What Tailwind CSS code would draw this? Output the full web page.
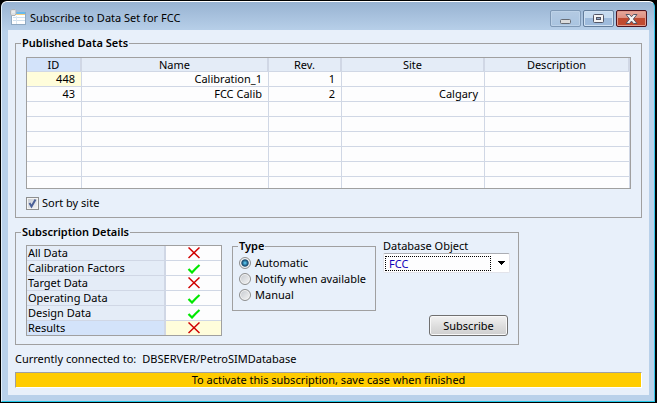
<!DOCTYPE html>
<html lang="en">
<head>
<meta charset="utf-8">
<title>Subscribe to Data Set for FCC</title>
<script src="https://cdn.jsdelivr.net/npm/@tailwindcss/browser@4"></script>
</head>
<body class="min-h-screen flex bg-black font-['Noto_Sans','Open_Sans',sans-serif] text-[11px] leading-[14px] text-black">
<div class="flex-1 flex flex-col m-px mr-[2px] rounded-t-md border border-t-white border-l-[#e4f0fa] border-r-[#35c5e8] border-b-[#20c8e8] bg-[#b9d1ea] bg-linear-to-b from-[#98b3d2] via-[#b9d1ea] via-[30px] to-[#b9d1ea] pl-[6px] pr-[5px] pb-[6px]">
  <header class="flex h-[28px] items-start pr-[2px]">
    <svg class="mt-[7px] ml-[2px] shrink-0" width="16" height="16" viewBox="0 0 16 16" aria-hidden="true">
      <rect x="1.500" y="3.500" width="14" height="12" fill="#fff" stroke="#8fa9c2"/>
      <rect x="6" y="3" width="9" height="2" fill="#66b9ec"/>
      <rect x="6" y="5" width="9" height="1" fill="#f5cf83"/>
      <path d="M3 8.500h12M3 11.500h12" stroke="#cfe0ee"/>
      <path d="M6.500 7v8" stroke="#dbe6f0"/>
      <path d="M.5 1.500L2 .5h3l1 1v3L5 6.500H1.500L.5 5z" fill="#dfe1e3" stroke="#aab2ba"/>
      <path d="M2 3h3" stroke="#f6f7f8"/>
    </svg>
    <h1 class="ml-[4px] mt-[8px] grow leading-[16px]">Subscribe to Data Set for FCC</h1>
    <div class="mt-[8px] flex gap-[2px]">
      <button type="button" aria-label="Minimize" class="grid h-[17px] w-[31px] place-items-center rounded-[2px] border border-[#7e98b5] bg-linear-to-b from-[#b4cae2] to-[#a9c4e0] shadow-[inset_0_0_0_1px_#bdd2e8]">
        <svg width="11" height="11" viewBox="0 0 11 11"><rect x=".5" y="6.500" width="10" height="4" rx="1" fill="#dcdcdc" stroke="#666b73"/></svg>
      </button>
      <button type="button" aria-label="Maximize" class="grid h-[17px] w-[31px] place-items-center rounded-[2px] border border-[#637d9b] bg-linear-to-b from-[#c5daef] from-50% to-[#9ebbdc] to-50% shadow-[inset_0_0_0_1px_#cfe0f1]">
        <svg width="11" height="9" viewBox="0 0 11 9"><rect x=".5" y=".5" width="10" height="8" rx="1" fill="#f5f5f5" stroke="#535666"/><rect x="3.500" y="3.500" width="4" height="2" fill="#8ea7c6" stroke="#535666"/></svg>
      </button>
      <button type="button" aria-label="Close" class="grid h-[17px] w-[31px] place-items-center rounded-[2px] border border-[#4d1420] bg-linear-to-b from-[#e6a99d] from-0% via-[#dd8d7e] via-50% to-[#c04a30] to-50% shadow-[inset_0_0_0_1px_#e29a8b]">
        <svg width="13" height="10" viewBox="0 0 13 10"><path d="M1 .5h3.500l2 2.300 2-2.300H12L8.400 5l3.600 4.500H8.500l-2-2.400-2 2.400H1L4.600 5z" fill="#f4f4f4" stroke="#535666"/></svg>
      </button>
    </div>
  </header>

  <main class="flex grow flex-col bg-[#e8f0fa] px-[7px] pt-[6px] pb-[7px]">
    <fieldset class="border border-[#a0a0a0] px-[10px] pt-[7px] pb-[7px]">
      <legend class="-ml-[5px] px-px font-semibold">Published Data Sets</legend>
      <div class="border border-[#a0a0a0] bg-[#fdfdfe]">
        <table class="w-full table-fixed border-separate border-spacing-0 [&_td]:h-[15px] [&_td]:border-b [&_td]:border-r [&_td]:border-[#d0d7e5] [&_td]:p-0 [&_td]:pr-[6px] [&_td]:text-right [&_th]:h-[14px] [&_th]:border-b [&_th]:border-r-2 [&_th]:border-[#d0d7e5] [&_th]:bg-[#e4ecf7] [&_th]:p-0 [&_th]:text-center [&_th]:font-normal [&_th]:leading-[13px] [&_tr:last-child_td]:h-[11px] [&_tr:last-child_td]:border-b-0">
          <colgroup><col class="w-[55px]"><col class="w-[187px]"><col class="w-[73px]"><col class="w-[143px]"><col></colgroup>
          <thead><tr><th scope="col" class="bg-[#d3e3fa]!">ID</th><th scope="col">Name</th><th scope="col">Rev.</th><th scope="col">Site</th><th scope="col">Description</th></tr></thead>
          <tbody>
            <tr><td class="bg-[#fffddb]">448</td><td>Calibration_1</td><td>1</td><td></td><td></td></tr>
            <tr><td>43</td><td>FCC Calib</td><td>2</td><td>Calgary</td><td></td></tr>
            <tr><td></td><td></td><td></td><td></td><td></td></tr>
            <tr><td></td><td></td><td></td><td></td><td></td></tr>
            <tr><td></td><td></td><td></td><td></td><td></td></tr>
            <tr><td></td><td></td><td></td><td></td><td></td></tr>
            <tr><td></td><td></td><td></td><td></td><td></td></tr>
            <tr><td></td><td></td><td></td><td></td><td></td></tr>
          </tbody>
        </table>
      </div>
      <label class="mt-[7px] flex w-fit items-center gap-[3px]">
        <span class="grid">
          <input type="checkbox" checked class="peer col-start-1 row-start-1 size-[13px] appearance-none border border-[#8e8f8f] bg-linear-to-br from-[#c5cad2] to-[#f6f6f6] shadow-[inset_0_0_0_1px_#f4f4f4]">
          <svg class="pointer-events-none invisible col-start-1 row-start-1 peer-checked:visible" width="13" height="13" viewBox="0 0 13 13"><path d="M3.500 6l2 3.500L9.500 2.500" fill="none" stroke="#4b6097" stroke-width="2"/></svg>
        </span>
        Sort by site
      </label>
    </fieldset>

    <fieldset class="mt-[7px] flex w-[504px] border border-[#a0a0a0] pl-[10px] pr-[8px] pb-[8px]">
      <legend class="-ml-[5px] px-px font-semibold">Subscription Details</legend>
      <div class="flex grow">
        <div class="mt-[6px] w-[196px] self-start border border-[#a0a0a0] bg-[#fdfdfe]">
          <table class="w-full table-fixed border-separate border-spacing-0 [&_td]:h-[15px] [&_td]:border-b [&_td]:border-[#d0d7e5] [&_td]:p-0 [&_th]:h-[15px] [&_th]:border-b [&_th]:border-r-2 [&_th]:border-[#d0d7e5] [&_th]:bg-[#e4ecf7] [&_th]:p-0 [&_th]:pl-px [&_th]:text-left [&_th]:font-normal [&_tr:last-child>*]:border-b-0 [&_tr:last-child>*]:h-[14px] [&_svg]:mx-auto [&_svg]:block">
            <colgroup><col class="w-[139px]"><col></colgroup>
            <tbody>
              <tr><th scope="row">All Data</th><td><svg role="img" aria-label="No" width="12" height="12" viewBox="0 0 12 12"><path d="M.5.500l11 10.500M11.500.500L.500 11" stroke="#d00000" stroke-width="1.500"/></svg></td></tr>
              <tr><th scope="row">Calibration Factors</th><td><svg role="img" aria-label="Yes" width="14" height="12" viewBox="0 0 14 12"><path d="M1.500 7l3.500 3.500Q8.500 6.500 12.500 3" fill="none" stroke="#00e800" stroke-width="2.200"/></svg></td></tr>
              <tr><th scope="row">Target Data</th><td><svg role="img" aria-label="No" width="12" height="12" viewBox="0 0 12 12"><path d="M.5.500l11 10.500M11.500.500L.500 11" stroke="#d00000" stroke-width="1.500"/></svg></td></tr>
              <tr><th scope="row">Operating Data</th><td><svg role="img" aria-label="Yes" width="14" height="12" viewBox="0 0 14 12"><path d="M1.500 7l3.500 3.500Q8.500 6.500 12.500 3" fill="none" stroke="#00e800" stroke-width="2.200"/></svg></td></tr>
              <tr><th scope="row">Design Data</th><td><svg role="img" aria-label="Yes" width="14" height="12" viewBox="0 0 14 12"><path d="M1.500 7l3.500 3.500Q8.500 6.500 12.500 3" fill="none" stroke="#00e800" stroke-width="2.200"/></svg></td></tr>
              <tr><th scope="row" class="bg-[#d3e3fa]!">Results</th><td class="bg-[#fffddb]"><svg role="img" aria-label="No" width="12" height="12" viewBox="0 0 12 12"><path d="M.5.500l11 10.500M11.500.500L.500 11" stroke="#d00000" stroke-width="1.500"/></svg></td></tr>
            </tbody>
          </table>
        </div>
        <fieldset class="ml-[10px] w-[144px] self-start border border-[#a0a0a0] pl-[6px] pb-[7px] [&_label]:flex [&_label]:h-[16px] [&_label]:items-center [&_label]:gap-[4px] [&_label]:whitespace-nowrap [&_input]:size-[12px] [&_input]:shrink-0 [&_input]:appearance-none [&_input]:rounded-full [&_input]:border [&_input]:border-[#8e8f8f] [&_input]:bg-linear-to-br [&_input]:from-[#c4c8ce] [&_input]:to-[#f6f6f6] [&_input]:shadow-[inset_0_0_0_1px_#f4f4f4] [&_input:checked]:bg-radial [&_input:checked]:from-[#5cc8f0] [&_input:checked]:from-5% [&_input:checked]:via-[#15486c] [&_input:checked]:via-45% [&_input:checked]:to-[#e4e6e8] [&_input:checked]:to-60%">
          <legend class="-ml-px px-px font-semibold">Type</legend>
          <div class="pt-[2px]">
            <label><input type="radio" name="type" checked>Automatic</label>
            <label><input type="radio" name="type">Notify when available</label>
            <label><input type="radio" name="type">Manual</label>
          </div>
        </fieldset>
        <div class="ml-[7px] flex grow flex-col">
          <label for="dbobj">Database Object</label>
          <div class="grid h-[20px] w-[127px] items-center rounded-[2px] border border-[#e2e3ea] border-t-[#abadb3] bg-white">
            <select id="dbobj" class="col-start-1 row-start-1 ml-px mr-[18px] h-[15px] appearance-none border border-dotted border-black bg-[#fdfdfe] pl-[3px] leading-[13px] text-[#1000b8] outline-none"><option>FCC</option></select>
            <svg class="pointer-events-none col-start-1 row-start-1 mr-[4px] justify-self-end" width="7" height="4" viewBox="0 0 7 4" shape-rendering="crispEdges"><path d="M0 0h7L3.500 4z"/></svg>
          </div>
          <button type="button" class="mt-auto mr-[2px] h-[21px] w-[79px] self-end rounded-[3px] border border-[#707070] bg-linear-to-b from-[#f2f2f2] from-0% via-[#dddddd] via-55% to-[#cfcfcf] shadow-[inset_0_0_0_1px_#f8f8f8]">Subscribe</button>
        </div>
      </div>
    </fieldset>

    <p class="mt-[7px] flex gap-[6px]"><span>Currently connected to:</span><span>DBSERVER/PetroSIMDatabase</span></p>
    <p class="mt-[6px] border border-[#a0a0a0] border-r-white border-b-white bg-[#ffcc00] text-center">To activate this subscription, save case when finished</p>
  </main>
</div>
</body>
</html>
